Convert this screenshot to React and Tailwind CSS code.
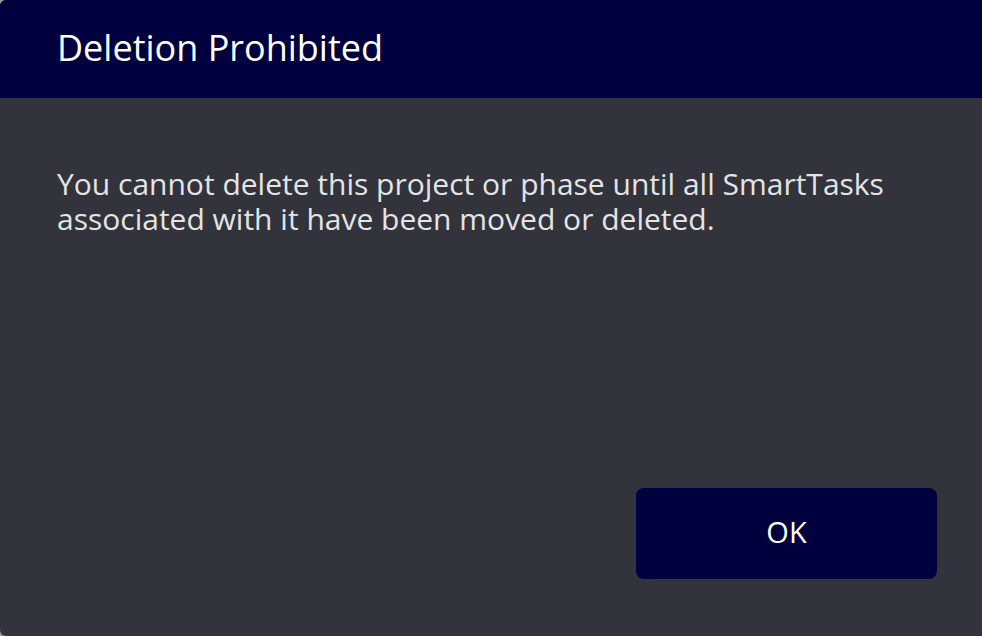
import React from "react"

const App = () => {
  return (
    <div className="w-[982px] h-[636px] bg-[#9a9aa0] font-['Open_Sans',sans-serif]">
      <div className="w-full h-full flex flex-col bg-[#32333b] rounded-l-[6px] overflow-hidden">
        <header className="h-[98px] bg-[#00003f] flex items-center px-[57px] pb-[3px]">
          <h1 className="text-[36px] font-medium text-white leading-none">Deletion Prohibited</h1>
        </header>
        <div className="flex-1 flex flex-col pl-[57px] pr-[60px] pt-[68px]">
          <p className="text-[30px] leading-[35px] text-[#e4e4e6]">
            You cannot delete this project or phase until all SmartTasks associated with it have been moved or deleted.
          </p>
          <div className="mt-auto mb-[57px] flex justify-end mr-[-15px]">
            <button className="w-[301px] h-[91px] rounded-[8px] bg-[#00003f] text-white text-[29px] font-medium pb-[4px]">
              OK
            </button>
          </div>
        </div>
      </div>
    </div>
  )
}

export default App
